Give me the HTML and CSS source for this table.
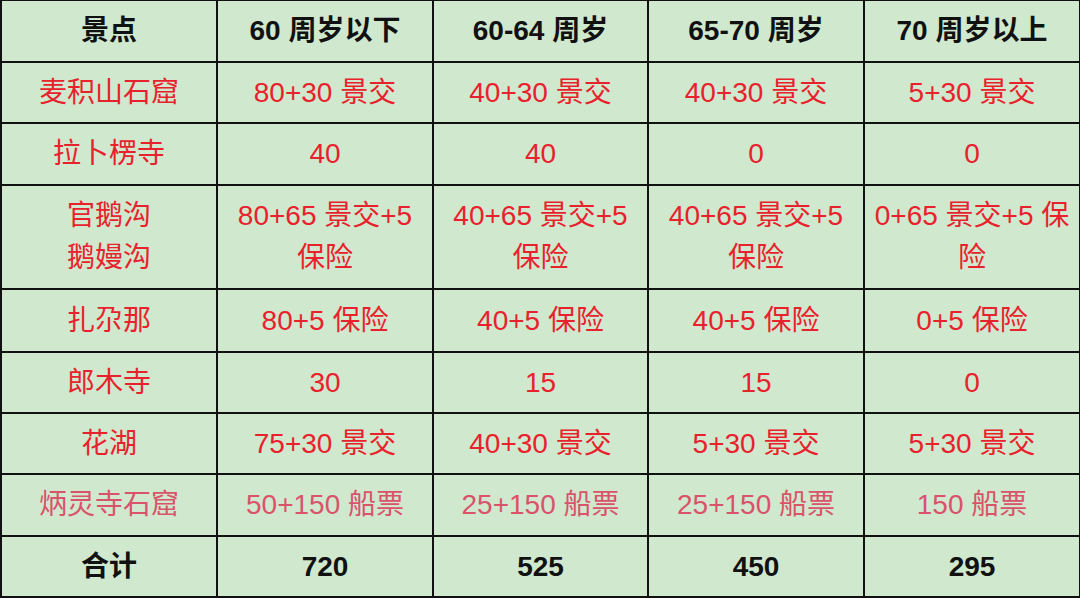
FILE: index.html
```html
<!DOCTYPE html>
<html lang="zh-CN">
<head>
<meta charset="utf-8">
<title>景点门票</title>
<link rel="stylesheet" href="styles.css">
</head>
<body>
<table class="fees">
  <colgroup>
    <col class="c1"><col class="c2"><col class="c3"><col class="c4"><col class="c5">
  </colgroup>
  <tr class="head r-h">
    <td>景点</td><td>60 周岁以下</td><td>60-64 周岁</td><td>65-70 周岁</td><td>70 周岁以上</td>
  </tr>
  <tr class="red r1">
    <td>麦积山石窟</td><td>80+30 景交</td><td>40+30 景交</td><td>40+30 景交</td><td>5+30 景交</td>
  </tr>
  <tr class="red r2">
    <td>拉卜楞寺</td><td>40</td><td>40</td><td>0</td><td>0</td>
  </tr>
  <tr class="red r3">
    <td>官鹅沟<br>鹅嫚沟</td><td>80+65 景交+5 保险</td><td>40+65 景交+5 保险</td><td>40+65 景交+5 保险</td><td>0+65 景交+5 保险</td>
  </tr>
  <tr class="red r4">
    <td>扎尕那</td><td>80+5 保险</td><td>40+5 保险</td><td>40+5 保险</td><td>0+5 保险</td>
  </tr>
  <tr class="red r5">
    <td>郎木寺</td><td>30</td><td>15</td><td>15</td><td>0</td>
  </tr>
  <tr class="red r6">
    <td>花湖</td><td>75+30 景交</td><td>40+30 景交</td><td>5+30 景交</td><td>5+30 景交</td>
  </tr>
  <tr class="pink r7">
    <td>炳灵寺石窟</td><td>50+150 船票</td><td>25+150 船票</td><td>25+150 船票</td><td>150 船票</td>
  </tr>
  <tr class="head r8">
    <td>合计</td><td>720</td><td>525</td><td>450</td><td>295</td>
  </tr>
</table>
</body>
</html>
```

FILE: styles.css
```css
html, body {
  margin: 0;
  padding: 0;
  background: #d0e8ce;
}
body {
  width: 1080px;
  height: 598px;
  overflow: hidden;
  font-family: "Liberation Sans", "Noto Sans CJK SC", sans-serif;
}
.fees {
  border-collapse: collapse;
  table-layout: fixed;
  width: 1079px;
  margin-top: -1px;
  background: #d0e8ce;
}
.c1 { width: 216px; }
.c2 { width: 216px; }
.c3 { width: 215px; }
.c4 { width: 216px; }
.c5 { width: 216px; }
.fees td {
  border: 2px solid #111;
  text-align: center;
  vertical-align: middle;
  padding: 0 5px;
  font-size: 28px;
  line-height: 42px;
  box-sizing: border-box;
}
.head td {
  color: #111;
  font-weight: bold;
}
.red td { color: #e8222c; }
.pink td { color: #d9536a; }
.r-h td { height: 62px; }
.r1 td { height: 61px; }
.r2 td { height: 62px; }
.r3 td { height: 104px; }
.r4 td { height: 63px; }
.r5 td { height: 61px; }
.r6 td { height: 61px; }
.r7 td { height: 62px; }
.r8 td { height: 61px; }
```
